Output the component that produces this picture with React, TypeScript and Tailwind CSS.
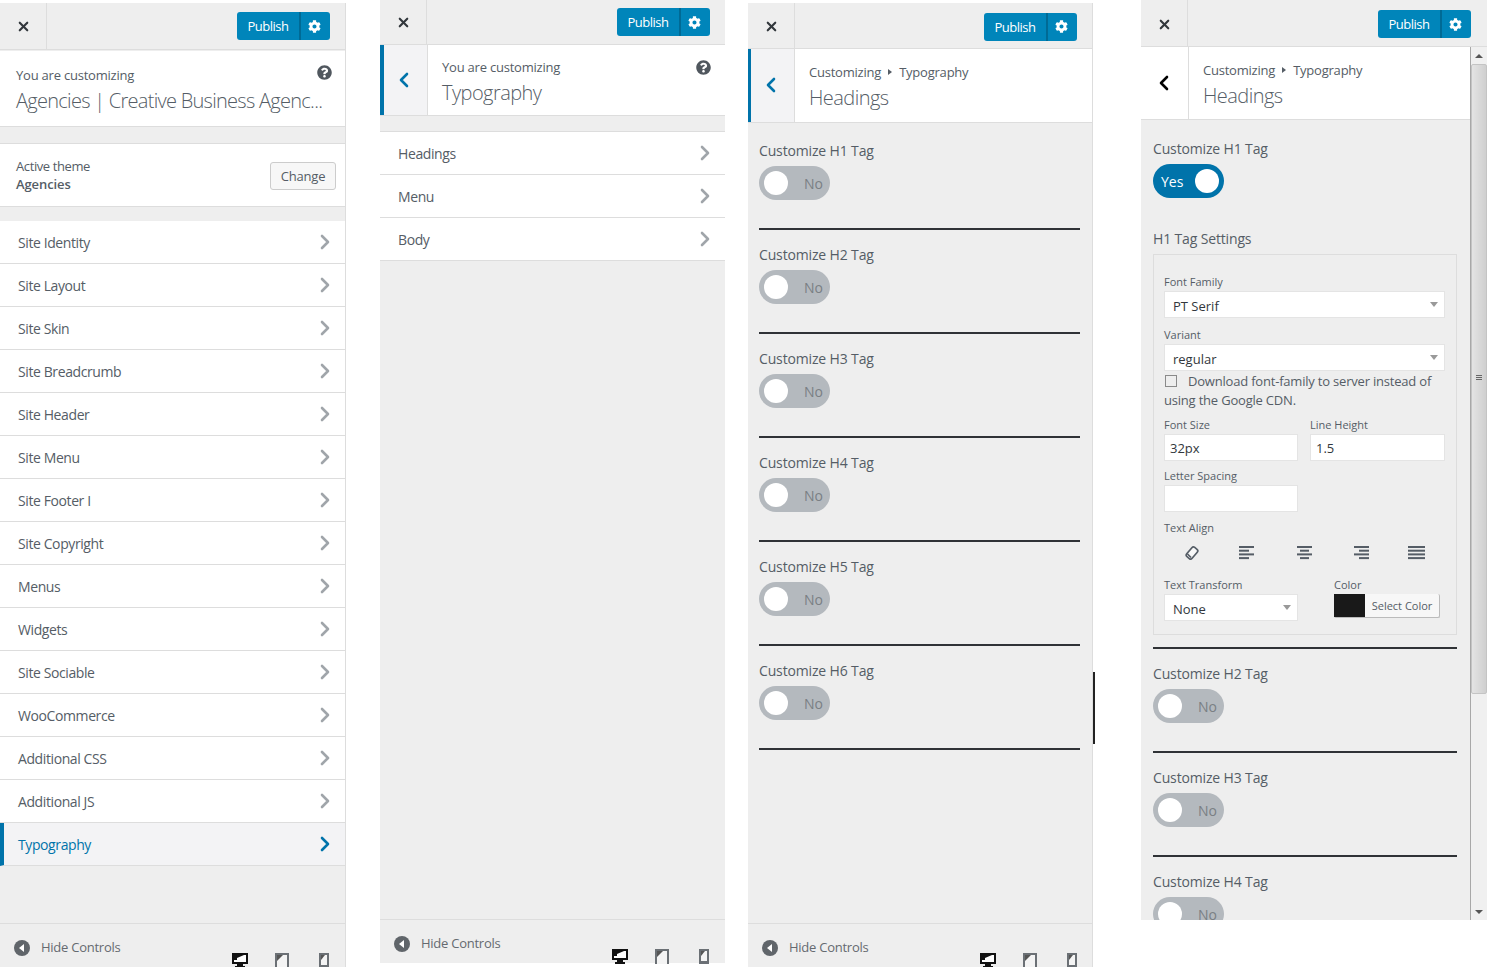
import { ChevronLeft, ChevronRight, X } from "lucide-react";
import { FaCog, FaQuestionCircle } from "react-icons/fa";

const menuItems = [
  "Site Identity",
  "Site Layout",
  "Site Skin",
  "Site Breadcrumb",
  "Site Header",
  "Site Menu",
  "Site Footer I",
  "Site Copyright",
  "Menus",
  "Widgets",
  "Site Sociable",
  "WooCommerce",
  "Additional CSS",
  "Additional JS",
];

function Header({ height, shift, right = "mr-[15px]" }: { height: string; shift?: boolean; right?: string }) {
  const nudge = shift ? "mt-[2px]" : "";
  return (
    <div className={`flex shrink-0 items-center justify-between border-b border-[#ddd] bg-[#eee] ${height}`}>
      <div className="flex h-full w-[47px] items-center justify-center border-r border-[#ddd]">
        <X className={`h-[15px] w-[15px] text-[#32373c] ${nudge}`} strokeWidth={3.4} />
      </div>
      <div className={`flex h-[28px] w-[93px] rounded-[3px] bg-[#0085ba] text-white ${right} ${nudge}`}>
        <span className="flex w-[64px] items-center justify-center border-r-2 border-[#006a95] pt-[2px] text-[13px] tracking-[-0.5px]">
          Publish
        </span>
        <span className="flex flex-1 items-center justify-center pr-[2px]">
          <FaCog className="h-[13px] w-[13px]" />
        </span>
      </div>
    </div>
  );
}

function Row({ label, active }: { label: string; active?: boolean }) {
  return (
    <div
      className={`flex h-[43px] items-center justify-between border-b border-[#ddd] ${
        active ? "border-l-4 border-l-[#0073aa] bg-[#f3f3f5] pl-[14px] text-[#0073aa]" : "bg-white pl-[18px] text-[#555d66]"
      } pr-[8px] text-[14px] font-medium tracking-[-0.4px]`}
    >
      <span>{label}</span>
      <ChevronRight className={`h-[24px] w-[24px] ${active ? "text-[#0073aa]" : "text-[#a0a5aa]"}`} strokeWidth={2.6} />
    </div>
  );
}

function Devices() {
  return (
    <div className="absolute left-[232px] top-[29px] flex">
      <svg width="16" height="15" viewBox="0 0 16 15" className="mr-[27px] shrink-0">
        <path d="M0 0h16v11h-5v2h2v2H3v-2h2v-2H0z" fill="#111" />
        <path d="M2 2h12v7H2z" fill="#fff" />
        <path d="M2 2h10L5 5v2H2z" fill="#111" />
      </svg>
      <svg width="14" height="15" viewBox="0 0 14 15" className="mr-[30px] shrink-0">
        <path d="M0 0h14v15H0z" fill="#6b7075" />
        <path d="M2 2h10v13H2z" fill="#f4f4f4" />
        <path d="M2 2h6L2 8z" fill="#555" />
      </svg>
      <svg width="10" height="15" viewBox="0 0 10 15" className="shrink-0">
        <path d="M0 0h10v15H0z" fill="#6b7075" />
        <path d="M2 2h6v10H2z" fill="#f4f4f4" />
        <path d="M2 2h4L2 7z" fill="#555" />
      </svg>
    </div>
  );
}

function Footer() {
  return (
    <div className="relative h-[44px] shrink-0 border-t border-[#ddd] bg-[#eee]">
      <div className="flex h-[47px] items-center pl-[14px] text-[13px] tracking-[-0.25px] text-[#656a70]">
        <svg width="16" height="16" viewBox="0 0 16 16" className="mr-[11px]">
          <circle cx="8" cy="8" r="8" fill="#60656a" />
          <path d="M5 8l5-4v8z" fill="#fff" />
        </svg>
        <span>Hide Controls</span>
      </div>
      <Devices />
    </div>
  );
}

function Toggle({ on }: { on?: boolean }) {
  return (
    <div
      className={`flex h-[34px] w-[71px] items-center rounded-full text-[14px] ${
        on ? "justify-between bg-[#0073aa] pl-[8px] pr-[5px] text-white" : "bg-[#b4b9be] pl-[5px] text-[#7a7f84]"
      }`}
    >
      {on && <span>Yes</span>}
      <span className="h-[24px] w-[24px] rounded-full bg-white" />
      {!on && <span className="ml-[16px]">No</span>}
    </div>
  );
}

function TagBlock({ n, on }: { n: number; on?: boolean }) {
  return (
    <div>
      <div className="mb-[5px] h-[20px] text-[14px] font-medium leading-[20px] tracking-[-0.15px] text-[#555d66]">Customize H{n} Tag</div>
      <Toggle on={on} />
    </div>
  );
}

function Hr() {
  return <div className="h-[2px] bg-[#2f3236]" />;
}

function Label({ children }: { children: string }) {
  return <div className="h-[18px] text-[11px] font-medium leading-[18px] text-[#555d66]">{children}</div>;
}

function Field({ value, arrow, width }: { value?: string; arrow?: boolean; width: string }) {
  return (
    <div className={`flex h-[27px] items-center justify-between border border-[#e4e4e4] bg-white pr-[6px] text-[13px] text-[#32373c] ${width} ${arrow ? "pl-[8px] pt-[4px]" : "pl-[5px] pt-[2px]"}`}>
      <span>{value}</span>
      {arrow && <span className="-mt-[4px] h-0 w-0 border-x-[4px] border-t-[5px] border-x-transparent border-t-[#999]" />}
    </div>
  );
}

function AlignIcon({ rows }: { rows: [number, number][] }) {
  return (
    <svg width="17" height="14" viewBox="0 0 17 14">
      {rows.map(([x, w], i) => (
        <rect key={i} x={x} y={i * 3.7} width={w} height="2" fill="#555d66" />
      ))}
    </svg>
  );
}

function H1Settings() {
  return (
    <div>
      <div className="mb-[5px] h-[20px] text-[14px] font-medium leading-[20px] tracking-[-0.15px] text-[#555d66]">H1 Tag Settings</div>
      <div className="h-[381px] border border-[#ddd] px-[10px] pt-[18px]">
        <Label>Font Family</Label>
        <Field value="PT Serif" arrow width="w-[281px]" />
        <div className="mt-[8px]">
          <Label>Variant</Label>
        </div>
        <Field value="regular" arrow width="w-[281px]" />
        <div className="mt-[1px] h-[38px] text-[13px] leading-[19px] tracking-[-0.2px] text-[#555d66]">
          <span className="mr-[11px] ml-[1px] inline-block h-[12px] w-[12px] border border-[#8a8a8a] bg-[#eee] align-[-1px]" />
          Download font-family to server instead of using the Google CDN.
        </div>
        <div className="mt-[6px] flex gap-[12px]">
          <div>
            <Label>Font Size</Label>
            <Field value="32px" width="w-[134px]" />
          </div>
          <div>
            <Label>Line Height</Label>
            <Field value="1.5" width="w-[135px]" />
          </div>
        </div>
        <div className="mt-[6px]">
          <Label>Letter Spacing</Label>
          <Field width="w-[134px]" />
        </div>
        <div className="mt-[7px]">
          <Label>Text Align</Label>
        </div>
        <div className="mt-[8px] flex h-[16px] w-[281px] items-center justify-between px-[20px]">
          <svg width="16" height="16" viewBox="0 0 16 16">
            <rect x="2" y="4.5" width="12" height="7" rx="2" transform="rotate(-50 8 8)" fill="#f8f8f8" stroke="#555d66" strokeWidth="1.7" />
            <path d="M3.5 9l3.5 3.5" stroke="#555d66" strokeWidth="1.7" />
          </svg>
          <AlignIcon rows={[[0, 15], [0, 10], [0, 15], [0, 10]]} />
          <AlignIcon rows={[[1, 15], [4, 9], [1, 15], [4, 9]]} />
          <AlignIcon rows={[[2, 15], [7, 10], [2, 15], [7, 10]]} />
          <AlignIcon rows={[[0, 17], [0, 17], [0, 17], [0, 17]]} />
        </div>
        <div className="mt-[15px] flex gap-[36px]">
          <div>
            <Label>Text Transform</Label>
            <Field value="None" arrow width="w-[134px]" />
          </div>
          <div>
            <Label>Color</Label>
            <div className="flex h-[24px] w-[106px] rounded-[2px] border-r border-b border-[#bbb] bg-[#f7f7f7] text-[11px] text-[#555d66]">
              <span className="w-[31px] bg-[#191919]" />
              <span className="flex flex-1 items-center justify-center pt-[1px]">Select Color</span>
            </div>
          </div>
        </div>
      </div>
    </div>
  );
}

function Scrollbar() {
  return (
    <div className="flex w-[17px] shrink-0 flex-col items-center border-l border-[#a8a8a8] bg-[#f0f0f0]">
      <div className="flex h-[17px] w-full items-center justify-center">
        <span className="h-0 w-0 border-x-[4px] border-b-[4px] border-x-transparent border-b-[#555]" />
      </div>
      <div className="flex h-[630px] w-full items-center justify-center rounded-[2px] border border-[#c4c4c4] bg-linear-to-r from-[#e4e4e4] to-[#cfcfcf]">
        <div className="mb-[4px] flex flex-col gap-[1px]">
          <span className="h-[1px] w-[6px] bg-[#666]" />
          <span className="h-[1px] w-[6px] bg-[#666]" />
          <span className="h-[1px] w-[6px] bg-[#666]" />
        </div>
      </div>
      <div className="flex-1" />
      <div className="flex h-[17px] w-full items-center justify-center">
        <span className="h-0 w-0 border-x-[4px] border-t-[4px] border-x-transparent border-t-[#555]" />
      </div>
    </div>
  );
}

function TitleBlock({ children, title, spacing = "tracking-[-0.55px]" }: { children: React.ReactNode; title: string; spacing?: string }) {
  return (
    <div>
      <div className="text-[13px] leading-[18px] tracking-[-0.22px] text-[#555d66]">{children}</div>
      <div className={`mt-[2px] whitespace-nowrap text-[20px] font-light leading-[30px] text-[#555d66] ${spacing}`}>{title}</div>
    </div>
  );
}

function Crumb() {
  return (
    <span className="flex items-center">
      Customizing
      <span className="mx-[7px] h-0 w-0 border-y-[3px] border-l-[4px] border-y-transparent border-l-[#555d66]" />
      Typography
    </span>
  );
}

function HelpIcon() {
  return <FaQuestionCircle className="h-[15px] w-[15px] text-[#50575e]" />;
}

function RootPanel() {
  return (
    <div className="mt-[3px] flex h-[964px] w-[346px] shrink-0 flex-col border-r border-[#ddd] bg-[#eee]">
      <Header height="h-[47px]" />
      <div className="mt-[1px] flex h-[76px] shrink-0 justify-between border-b border-[#ddd] bg-white pl-[16px] pr-[13px] pt-[15px]">
        <div className="min-w-0 flex-1">
          <TitleBlock title="Agencies | Creative Business Agenc..." spacing="tracking-[-0.72px]">
            You are customizing
          </TitleBlock>
        </div>
        <div className="-mt-[1px]">
          <HelpIcon />
        </div>
      </div>
      <div className="mt-[16px] flex h-[64px] shrink-0 items-center justify-between border-y border-[#ddd] bg-white pl-[16px] pr-[9px]">
        <div className="text-[13px] leading-[18px] tracking-[-0.4px] text-[#555d66]">
          <div>Active theme</div>
          <div className="font-semibold tracking-[-0.1px]">Agencies</div>
        </div>
        <div className="mt-[2px] flex h-[28px] w-[66px] items-center justify-center rounded-[3px] border border-[#ccc] bg-[#f7f7f7] pt-[2px] text-[13px] tracking-[-0.2px] text-[#555d66]">
          Change
        </div>
      </div>
      <div className="mt-[14px]">
        {menuItems.map((item) => (
          <Row key={item} label={item} />
        ))}
        <Row label="Typography" active />
      </div>
      <div className="flex-1" />
      <Footer />
    </div>
  );
}

function TypographyPanel() {
  return (
    <div className="ml-[34px] flex h-[963px] w-[345px] shrink-0 flex-col bg-[#eee]">
      <Header height="h-[45px]" />
      <div className="flex h-[71px] shrink-0 border-b border-[#ddd] bg-white">
        <div className="flex w-[48px] items-center justify-center border-r border-[#ddd] border-l-4 border-l-[#0073aa] bg-[#f3f3f5] pr-[4px]">
          <ChevronLeft className="h-[24px] w-[24px] text-[#0073aa]" strokeWidth={2.6} />
        </div>
        <div className="flex-1 pl-[14px] pt-[13px]">
          <TitleBlock title="Typography">You are customizing</TitleBlock>
        </div>
        <div className="pr-[14px] pt-[15px]">
          <HelpIcon />
        </div>
      </div>
      <div className="mt-[15px] border-t border-[#ddd]">
        {["Headings", "Menu", "Body"].map((item) => (
          <Row key={item} label={item} />
        ))}
      </div>
      <div className="flex-1" />
      <Footer />
    </div>
  );
}

function HeadingsPanel() {
  return (
    <div className="relative ml-[23px] mt-[3px] flex h-[964px] w-[345px] shrink-0 flex-col border-r border-[#ddd] bg-[#eee]">
      <Header height="h-[46px]" shift />
      <div className="flex h-[74px] shrink-0 border-b border-[#ddd] bg-white">
        <div className="flex w-[47px] items-center justify-center border-r border-[#ddd] border-l-[3px] border-l-[#0073aa] bg-[#f3f3f5] pb-[2px] pr-[4px]">
          <ChevronLeft className="h-[24px] w-[24px] text-[#0073aa]" strokeWidth={2.6} />
        </div>
        <div className="pl-[14px] pt-[14px]">
          <TitleBlock title="Headings">
            <Crumb />
          </TitleBlock>
        </div>
      </div>
      <div className="flex-1 px-[11px] pt-[18px]">
        <div className="flex w-[321px] flex-col">
          {[1, 2, 3, 4, 5, 6].map((n) => (
            <div key={n} className="h-[104px]">
              <TagBlock n={n} />
              <div className="mt-[28px]">
                <Hr />
              </div>
            </div>
          ))}
        </div>
      </div>
      <Footer />
      <div className="absolute -right-[3px] top-[669px] h-[72px] w-[2px] bg-[#222]" />
    </div>
  );
}

function H1Panel() {
  return (
    <div className="ml-[48px] flex h-[920px] w-[346px] shrink-0 flex-col overflow-hidden bg-[#eee]">
      <Header height="h-[47px]" shift right="mr-[16px]" />
      <div className="flex min-h-0 flex-1">
        <div className="w-[329px] shrink-0 overflow-hidden">
          <div className="flex h-[73px] border-b border-[#ddd] bg-white">
            <div className="flex w-[48px] items-center justify-center border-r border-[#ddd] pr-[2px]">
              <ChevronLeft className="h-[24px] w-[24px] text-black" strokeWidth={2.6} />
            </div>
            <div className="pl-[14px] pt-[14px]">
              <TitleBlock title="Headings">
                <Crumb />
              </TitleBlock>
            </div>
          </div>
          <div className="pl-[12px] pr-[13px] pt-[19px]">
            <TagBlock n={1} on />
            <div className="mt-[31px]">
              <H1Settings />
            </div>
            <div className="mt-[12px]">
              <Hr />
            </div>
            {[2, 3, 4].map((n) => (
              <div key={n} className="h-[104px] pt-[15px]">
                <TagBlock n={n} />
                <div className="mt-[28px]">
                  <Hr />
                </div>
              </div>
            ))}
          </div>
        </div>
        <Scrollbar />
      </div>
    </div>
  );
}

export default function App() {
  return (
    <div className="flex h-[967px] w-[1487px] items-start overflow-hidden bg-white font-['Open_Sans',sans-serif]">
      <RootPanel />
      <TypographyPanel />
      <HeadingsPanel />
      <H1Panel />
    </div>
  );
}
